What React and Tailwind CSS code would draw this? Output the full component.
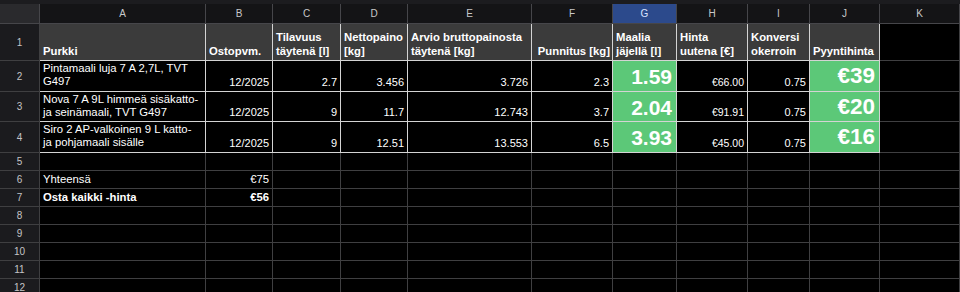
import React from 'react'

const cols = ['A', 'B', 'C', 'D', 'E', 'F', 'G', 'H', 'I', 'J', 'K']

const products = [
  {
    name: ['Pintamaali luja 7 A 2,7L, TVT', 'G497'],
    date: '12/2025',
    vol: '2.7',
    net: '3.456',
    gross: '3.726',
    weigh: '2.3',
    left: '1.59',
    price: '€66.00',
    conv: '0.75',
    sale: '€39',
    h: 'h-[31px]',
  },
  {
    name: ['Nova 7 A 9L himmeä sisäkatto-', 'ja seinämaali, TVT G497'],
    date: '12/2025',
    vol: '9',
    net: '11.7',
    gross: '12.743',
    weigh: '3.7',
    left: '2.04',
    price: '€91.91',
    conv: '0.75',
    sale: '€20',
    h: 'h-[30px]',
  },
  {
    name: ['Siro 2 AP-valkoinen 9 L katto-', 'ja pohjamaali sisälle'],
    date: '12/2025',
    vol: '9',
    net: '12.51',
    gross: '13.553',
    weigh: '6.5',
    left: '3.93',
    price: '€45.00',
    conv: '0.75',
    sale: '€16',
    h: 'h-[31px]',
  },
]

const W = 'border-r border-b border-[#d4d4d4] overflow-hidden'
const G = 'border-r border-b border-[#3f3f41] overflow-hidden'

function RowNum({ n, h }) {
  return (
    <div className={`${h} flex items-center justify-center bg-[#1b1b1e] border-r border-b border-[#3f3f41] text-[10px] text-[#c4c4c6]`}>
      {n}
    </div>
  )
}

function Head({ children, right }) {
  return (
    <div
      className={`${W} bg-[#3b3b3b] flex items-end pl-[3px] pr-[2px] pb-[2px] font-bold text-[11.3px] leading-[14px] text-white ${
        right ? 'justify-end' : ''
      }`}
    >
      <span>{children}</span>
    </div>
  )
}

function Num({ children, small }) {
  return (
    <div
      className={`${W} bg-black flex items-end justify-end px-[3px] pb-[2px] text-white ${
        small ? 'text-[10.5px]' : 'text-[11px]'
      } leading-[13px]`}
    >
      {children}
    </div>
  )
}

function Big({ children, size }) {
  return (
    <div className={`${W} bg-[#5cc878] flex items-center justify-end pr-[4px] pt-[1px] text-white font-bold ${size} leading-none`}>
      {children}
    </div>
  )
}

function Empty({ n }) {
  return Array.from({ length: n }).map((_, i) => <div key={i} className={`${G} bg-black`} />)
}

export default function App() {
  return (
    <div className="w-[960px] h-[292px] overflow-hidden bg-black font-['Liberation_Sans',Arial,sans-serif]">
      <div className="h-[4px] bg-[#1c1c1f]" />
      <div className="grid grid-cols-[40px_166px_67px_68px_67px_124px_81px_64px_71px_62px_70px_80px]">
        {/* column letters */}
        <div className="h-[20px] bg-[#2a2a2d] border-r border-b border-[#46464a]" />
        {cols.map((c) => (
          <div
            key={c}
            className={`h-[20px] flex items-center justify-center border-r border-b text-[10px] ${
              c === 'G'
                ? 'bg-[#2c4a8c] border-[#46464a] text-[#d8e2ff]'
                : 'bg-[#141416] border-[#46464a] text-[#c8c8ca]'
            }`}
          >
            {c}
          </div>
        ))}

        {/* row 1 */}
        <RowNum n="1" h="h-[37px]" />
        <Head>Purkki</Head>
        <Head>Ostopvm.</Head>
        <Head>Tilavuus täytenä [l]</Head>
        <Head>Nettopaino [kg]</Head>
        <Head>Arvio bruttopainosta täytenä [kg]</Head>
        <Head right>Punnitus [kg]</Head>
        <Head>Maalia jäjellä [l]</Head>
        <Head>Hinta uutena [€]</Head>
        <Head>Konversi okerroin</Head>
        <Head>Pyyntihinta</Head>
        <div className={`${G} bg-black`} />

        {/* product rows */}
        {products.map((p, i) => (
          <React.Fragment key={i}>
            <RowNum n={i + 2} h={p.h} />
            <div className={`${W} bg-black pl-[3px] pt-[1px] text-[11.3px] leading-[13px] text-white whitespace-nowrap`}>
              {p.name[0]}
              <br />
              {p.name[1]}
            </div>
            <Num>{p.date}</Num>
            <Num>{p.vol}</Num>
            <Num>{p.net}</Num>
            <Num>{p.gross}</Num>
            <Num>{p.weigh}</Num>
            <Big size="text-[21px]">{p.left}</Big>
            <Num small>{p.price}</Num>
            <Num>{p.conv}</Num>
            <Big size="text-[22.5px]">{p.sale}</Big>
            <div className={`${G} bg-black`} />
          </React.Fragment>
        ))}

        {/* row 5 */}
        <RowNum n="5" h="h-[18px]" />
        <Empty n={11} />

        {/* row 6 */}
        <RowNum n="6" h="h-[18px]" />
        <div className={`${G} bg-black flex items-center px-[3px] text-[11.3px] text-white`}>Yhteensä</div>
        <div className={`${G} bg-black flex items-center justify-end px-[3px] text-[11.3px] text-white`}>€75</div>
        <Empty n={9} />

        {/* row 7 */}
        <RowNum n="7" h="h-[18px]" />
        <div className={`${G} bg-black flex items-center px-[3px] text-[11.3px] font-bold text-white`}>Osta kaikki -hinta</div>
        <div className={`${G} bg-black flex items-center justify-end px-[3px] text-[11.3px] font-bold text-white`}>€56</div>
        <Empty n={9} />

        {['8', '9', '10', '11', '12'].map((n) => (
          <React.Fragment key={n}>
            <RowNum n={n} h="h-[18px]" />
            <Empty n={11} />
          </React.Fragment>
        ))}
      </div>
    </div>
  )
}
